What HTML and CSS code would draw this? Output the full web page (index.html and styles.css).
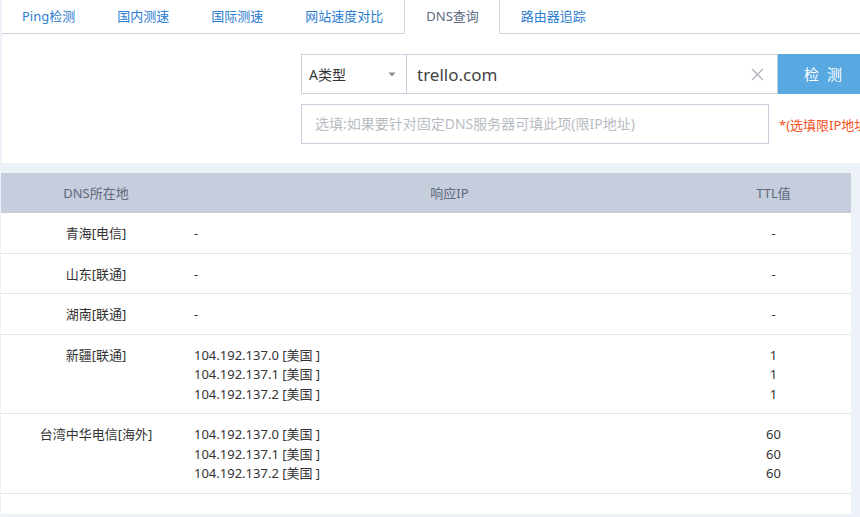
FILE: index.html
```html
<!DOCTYPE html>
<html lang="zh-CN">
<head>
<meta charset="utf-8">
<title>DNS查询</title>
<link rel="stylesheet" href="styles.css">
</head>
<body>
<div class="page">
  <div class="panel">
    <div class="tabs">
      <div class="tab">Ping检测</div>
      <div class="tab">国内测速</div>
      <div class="tab">国际测速</div>
      <div class="tab">网站速度对比</div>
      <div class="tab active">DNS查询</div>
      <div class="tab">路由器追踪</div>
    </div>
    <div class="form">
      <div class="row">
        <div class="select">
          <span>A类型</span>
          <svg class="caret" width="8" height="5" viewBox="0 0 8 5"><path d="M0.5 0.5 L7.5 0.5 L4 4.5 Z" fill="#8a8f99"/></svg>
        </div>
        <div class="input">
          <span class="value">trello.com</span>
          <svg class="clear" width="13" height="13" viewBox="0 0 13 13"><path d="M1 1 L12 12 M12 1 L1 12" stroke="#a9adb5" stroke-width="1.1" fill="none"/></svg>
        </div>
        <div class="btn">检&nbsp;&nbsp;测</div>
      </div>
      <div class="row row2">
        <div class="dns-input">选填:如果要针对固定DNS服务器可填此项(限IP地址)</div>
        <div class="hint">*(选填限IP地址)</div>
      </div>
    </div>
  </div>

  <div class="table">
    <div class="thead">
      <div class="c1">DNS所在地</div>
      <div class="c2">响应IP</div>
      <div class="c3">TTL值</div>
    </div>
    <div class="tr">
      <div class="c1">青海[电信]</div>
      <div class="c2">-</div>
      <div class="c3">-</div>
    </div>
    <div class="tr">
      <div class="c1">山东[联通]</div>
      <div class="c2">-</div>
      <div class="c3">-</div>
    </div>
    <div class="tr">
      <div class="c1">湖南[联通]</div>
      <div class="c2">-</div>
      <div class="c3">-</div>
    </div>
    <div class="tr">
      <div class="c1">新疆[联通]</div>
      <div class="c2">104.192.137.0 [美国 ]<br>104.192.137.1 [美国 ]<br>104.192.137.2 [美国 ]</div>
      <div class="c3">1<br>1<br>1</div>
    </div>
    <div class="tr">
      <div class="c1">台湾中华电信[海外]</div>
      <div class="c2">104.192.137.0 [美国 ]<br>104.192.137.1 [美国 ]<br>104.192.137.2 [美国 ]</div>
      <div class="c3">60<br>60<br>60</div>
    </div>
  </div>
</div>
</body>
</html>
```
FILE: styles.css
```css
html, body {
  margin: 0;
  padding: 0;
  overflow: hidden;
  background: #edf2f8;
}
body {
  font-family: "Noto Sans", "Noto Sans CJK SC", sans-serif;
  font-size: 13px;
  color: #333;
}
.page {
  width: 900px;
  padding-bottom: 20px;
}
.panel {
  margin-left: 2px;
  background: #fff;
  height: 163px;
}
.tabs {
  display: flex;
  height: 33px;
  border-bottom: 1px solid #ccd2de;
}
.tab {
  padding: 0 21px;
  line-height: 33px;
  height: 33px;
  color: #2b7dd0;
  white-space: nowrap;
}
.tab:first-child {
  padding-left: 20px;
}
.tab.active {
  color: #5d6c82;
  background: #fff;
  border-left: 1px solid #ccd2de;
  border-right: 1px solid #ccd2de;
  height: 34px;
  margin-bottom: -1px;
  padding: 0 20px 0 21px;
}
.form {
  padding-left: 299px;
  padding-top: 20px;
}
.row {
  display: flex;
  align-items: center;
}
.row2 {
  margin-top: 10px;
}
.select {
  border: 1px solid #c9d0dd;
  display: flex;
  align-items: center;
  justify-content: space-between;
  padding: 0 10px 0 7px;
  box-sizing: border-box;
  width: 106px;
  height: 40px;
  font-size: 14px;
  color: #333;
}
.caret {
  display: block;
}
.input {
  width: 371px;
  height: 40px;
  box-sizing: border-box;
  border: 1px solid #c9d0dd;
  border-left: none;
  display: flex;
  align-items: center;
  justify-content: space-between;
  padding: 0 13px 0 10px;
}
.value {
  font-size: 17px;
  color: #444;
}
.clear {
  display: block;
}
.btn {
  width: 90px;
  height: 40px;
  background: #58a8e2;
  color: #fff;
  font-size: 15px;
  line-height: 40px;
  text-align: center;
}
.dns-input {
  width: 468px;
  height: 40px;
  box-sizing: border-box;
  border: 1px solid #c9d0dd;
  padding-left: 13px;
  line-height: 38px;
  font-size: 14px;
  color: #b9bcc2;
  white-space: nowrap;
}
.hint {
  margin-left: 10px;
  color: #f4511e;
  font-size: 13px;
  white-space: nowrap;
}
.table {
  margin-top: 10px;
  margin-left: 1px;
  width: 850px;
  background: #fff;
  padding-bottom: 20px;
}
.thead, .tr {
  display: grid;
  grid-template-columns: 190px 517px 143px;
}
.thead {
  height: 40px;
  line-height: 40px;
  background: #c6cddc;
  color: #5f6a80;
}
.thead .c1, .thead .c2 {
  text-align: center;
}
.thead .c3 {
  text-align: center;
  padding-right: 12px;
}
.tr {
  border-bottom: 1px solid #e4e6ea;
  line-height: 19.5px;
  padding: 11px 0 9px;
}
.tr .c1 {
  text-align: center;
}
.tr .c2 {
  padding-left: 3px;
}
.tr .c3 {
  text-align: center;
  padding-right: 12px;
}
```
